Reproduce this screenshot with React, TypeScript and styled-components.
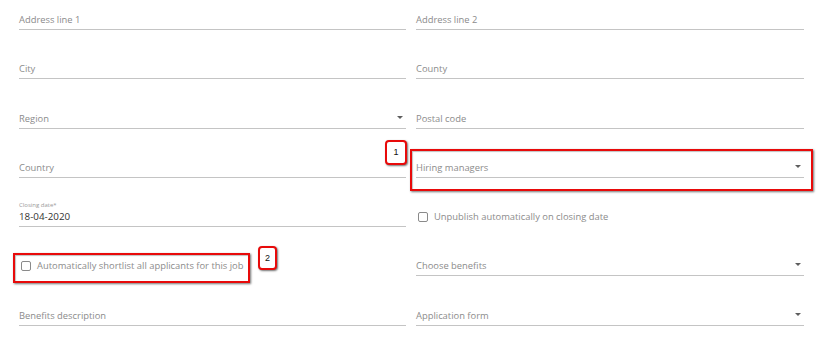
import React from "react";
import styled, { createGlobalStyle } from "styled-components";

const GlobalStyle = createGlobalStyle`
  html, body {
    margin: 0;
    padding: 0;
    background: #ffffff;
    font-family: "Open Sans", "Liberation Sans", sans-serif;
  }
`;

const Form = styled.div`
  width: 840px;
  height: 345px;
  box-sizing: border-box;
  padding: 0 36px 0 19px;
  display: grid;
  grid-template-columns: 387px 388px;
  column-gap: 10px;
  grid-template-rows: 30px repeat(6, 49.25px);
  overflow: hidden;
`;

const Field = styled.div<{ $select?: boolean }>`
  position: relative;
  align-self: end;
  display: flex;
  flex-direction: column;
  justify-content: flex-end;
  border-bottom: 1px solid #c4c4c4;
  padding-right: ${(p) => (p.$select ? "12px" : "0")};
`;

const Value = styled.div<{ $filled?: boolean }>`
  height: 19px;
  display: flex;
  align-items: center;
  font-size: ${(p) => (p.$filled ? "9.8px" : "9.4px")};
  color: ${(p) => (p.$filled ? "#333333" : "#8c8c8c")};
`;

const SmallLabel = styled.div`
  font-size: 6px;
  color: #9a9a9a;
  line-height: 8px;
  margin-bottom: -2px;
`;

const Arrow = styled.span`
  position: absolute;
  right: 3px;
  bottom: 9px;
  width: 0;
  height: 0;
  border-left: 3px solid transparent;
  border-right: 3px solid transparent;
  border-top: 3.5px solid #5e5e5e;
`;

const CheckRow = styled.label`
  position: relative;
  align-self: end;
  height: 20px;
  display: flex;
  align-items: center;
  gap: 6px;
  padding-left: 2px;
  padding-bottom: 1px;
  box-sizing: border-box;
  font-size: 9.4px;
  color: #8c8c8c;
`;

const Box = styled.span`
  width: 10px;
  height: 10px;
  box-sizing: border-box;
  border: 1.5px solid #8a8a8a;
  border-radius: 2px;
  flex-shrink: 0;
`;

const Highlight = styled.div<{ $t: number; $r: number; $b: number; $l: number }>`
  position: absolute;
  top: ${(p) => p.$t}px;
  right: ${(p) => p.$r}px;
  bottom: ${(p) => p.$b}px;
  left: ${(p) => p.$l}px;
  border: 2.5px solid #e80a0a;
  box-shadow: 1px 1px 2px rgba(0, 0, 0, 0.55), inset 1px 1px 1px rgba(0, 0, 0, 0.25);
  pointer-events: none;
`;

const Badge = styled.div<{ $x: number; $y: number; $w: number; $h: number }>`
  position: absolute;
  left: ${(p) => p.$x}px;
  top: ${(p) => p.$y}px;
  width: ${(p) => p.$w}px;
  height: ${(p) => p.$h}px;
  box-sizing: border-box;
  border: 2.5px solid #e80a0a;
  border-radius: 4px;
  background: #ffffff;
  box-shadow: 1px 1px 2px rgba(0, 0, 0, 0.55);
  display: flex;
  align-items: center;
  justify-content: center;
  font-family: "Liberation Sans", Arial, sans-serif;
  font-size: 9px;
  color: #111111;
`;

function TextField({ label }: { label: string }) {
  return (
    <Field>
      <Value>{label}</Value>
    </Field>
  );
}

function SelectField({ label, children }: { label: string; children?: React.ReactNode }) {
  return (
    <Field $select>
      <Value>{label}</Value>
      <Arrow />
      {children}
    </Field>
  );
}

export default function App() {
  return (
    <>
      <GlobalStyle />
      <Form>
        <TextField label="Address line 1" />
        <TextField label="Address line 2" />

        <TextField label="City" />
        <TextField label="County" />

        <SelectField label="Region" />
        <TextField label="Postal code" />

        <TextField label="Country" />
        <SelectField label="Hiring managers">
          <Highlight $t={-9} $r={-9} $b={-14} $l={-6} />
          <Badge $x={-31} $y={-18} $w={22} $h={25}>1</Badge>
        </SelectField>

        <Field>
          <SmallLabel>Closing date*</SmallLabel>
          <Value $filled>18-04-2020</Value>
        </Field>
        <CheckRow>
          <Box />
          Unpublish automatically on closing date
        </CheckRow>

        <CheckRow>
          <Box />
          Automatically shortlist all applicants for this job
          <Highlight $t={-3} $r={156} $b={-7} $l={-6} />
          <Badge $x={239} $y={-10} $w={19} $h={24}>2</Badge>
        </CheckRow>
        <SelectField label="Choose benefits" />

        <TextField label="Benefits description" />
        <SelectField label="Application form" />
      </Form>
    </>
  );
}
